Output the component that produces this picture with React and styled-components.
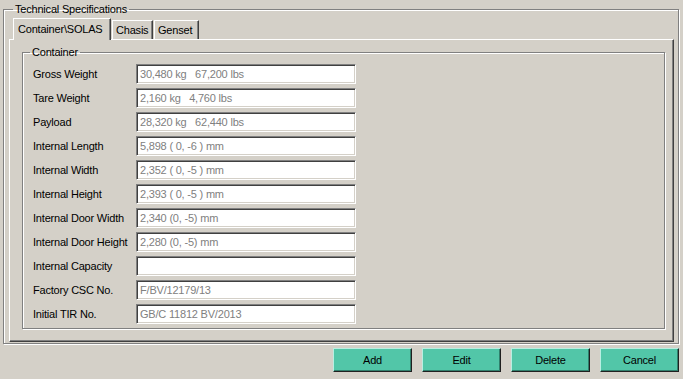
import React from "react";
import styled, { createGlobalStyle } from "styled-components";

const Global = createGlobalStyle`
  html, body { margin: 0; padding: 0; background: #d4d0c8; }
  body {
    font-family: "Liberation Sans", Arial, sans-serif;
    font-size: 11px;
    letter-spacing: -0.2px;
    color: #000;
  }
`;

const Page = styled.div`
  width: 683px;
  height: 379px;
  box-sizing: border-box;
  padding: 3px 4px 0 3px;
  display: flex;
  flex-direction: column;
`;

const Group = styled.fieldset`
  margin: 0;
  padding: ${(p) => p.$pad || "0"};
  border: 1px solid #808080;
  box-shadow: inset 1px 1px 0 #fff, 1px 1px 0 #fff;
  min-width: 0;
`;

const Legend = styled.legend`
  padding: 0 2px;
  margin-left: ${(p) => p.$indent || 9}px;
  line-height: 13px;
  font-size: 11px;
`;

const TabStrip = styled.div`
  display: flex;
  align-items: flex-end;
  height: 22px;
  padding-left: 4px;
  position: relative;
  z-index: 1;
`;

const Tab = styled.div`
  box-sizing: border-box;
  height: ${(p) => (p.$active ? "22px" : "19px")};
  margin-bottom: ${(p) => (p.$active ? "-1px" : "0")};
  width: ${(p) => p.$w}px;
  padding: ${(p) => (p.$active ? "4px 0 0 4px" : "3px 0 0 3px")};
  border-top: 1px solid #fff;
  border-left: 1px solid #fff;
  border-right: 1px solid #404040;
  box-shadow: inset -1px 0 0 #808080;
  background: #d4d0c8;
  white-space: nowrap;
  line-height: 13px;
  margin-left: ${(p) => (p.$active ? "0" : "1px")};
`;

const TabPanel = styled.div`
  box-sizing: border-box;
  height: 303px;
  border-top: 1px solid #fff;
  border-left: 1px solid #fff;
  border-right: 1px solid #404040;
  border-bottom: 1px solid #404040;
  box-shadow: inset -1px -1px 0 #808080;
  padding: 6px 8px 0 12px;
`;

const Rows = styled.div`
  display: flex;
  flex-direction: column;
  gap: 4px;
  padding: 5px 0 0 10px;
`;

const Row = styled.div`
  display: flex;
  align-items: center;
  height: 20px;
`;

const Label = styled.div`
  width: 103px;
  white-space: nowrap;
`;

const Field = styled.div`
  box-sizing: border-box;
  width: 220px;
  height: 20px;
  background: #fff;
  color: #808080;
  border-top: 1px solid #808080;
  border-left: 1px solid #808080;
  border-right: 1px solid #fff;
  border-bottom: 1px solid #fff;
  box-shadow: inset 1px 1px 0 #404040, inset -1px -1px 0 #d4d0c8;
  padding: 3px 0 0 3px;
  line-height: 13px;
  white-space: pre;
`;

const ButtonBar = styled.div`
  display: flex;
  justify-content: flex-end;
  gap: 10px;
  margin-top: 4px;
`;

const Button = styled.button`
  box-sizing: border-box;
  width: 79px;
  height: 24px;
  margin: 0;
  padding: 0;
  font: inherit;
  letter-spacing: inherit;
  color: #000;
  background: #52c6a8;
  border-top: 1px solid #b8efe2;
  border-left: 1px solid #b8efe2;
  border-right: 1px solid #202020;
  border-bottom: 1px solid #202020;
  box-shadow: inset -1px -1px 0 #2f7f6c;
`;

const rows = [
  ["Gross Weight", "30,480 kg   67,200 lbs"],
  ["Tare Weight", "2,160 kg   4,760 lbs"],
  ["Payload", "28,320 kg   62,440 lbs"],
  ["Internal Length", "5,898 ( 0, -6 ) mm"],
  ["Internal Width", "2,352 ( 0, -5 ) mm"],
  ["Internal Height", "2,393 ( 0, -5 ) mm"],
  ["Internal Door Width", "2,340 (0, -5) mm"],
  ["Internal Door Height", "2,280 (0, -5) mm"],
  ["Internal Capacity", ""],
  ["Factory CSC No.", "F/BV/12179/13"],
  ["Initial TIR No.", "GB/C 11812 BV/2013"],
];

export default function App() {
  return (
    <Page>
      <Global />
      <Group $pad="1px 4px 1px 5px">
        <Legend $indent={4}>Technical Specifications</Legend>
        <TabStrip>
          <Tab $active $w={98}>Container\SOLAS</Tab>
          <Tab $w={41}>Chasis</Tab>
          <Tab $w={45}>Genset</Tab>
        </TabStrip>
        <TabPanel>
          <Group $pad="0 0 4px 0">
            <Legend $indent={7}>Container</Legend>
            <Rows>
              {rows.map(([l, v]) => (
                <Row key={l}>
                  <Label>{l}</Label>
                  <Field>{v}</Field>
                </Row>
              ))}
            </Rows>
          </Group>
        </TabPanel>
      </Group>
      <ButtonBar>
        <Button>Add</Button>
        <Button>Edit</Button>
        <Button>Delete</Button>
        <Button>Cancel</Button>
      </ButtonBar>
    </Page>
  );
}
